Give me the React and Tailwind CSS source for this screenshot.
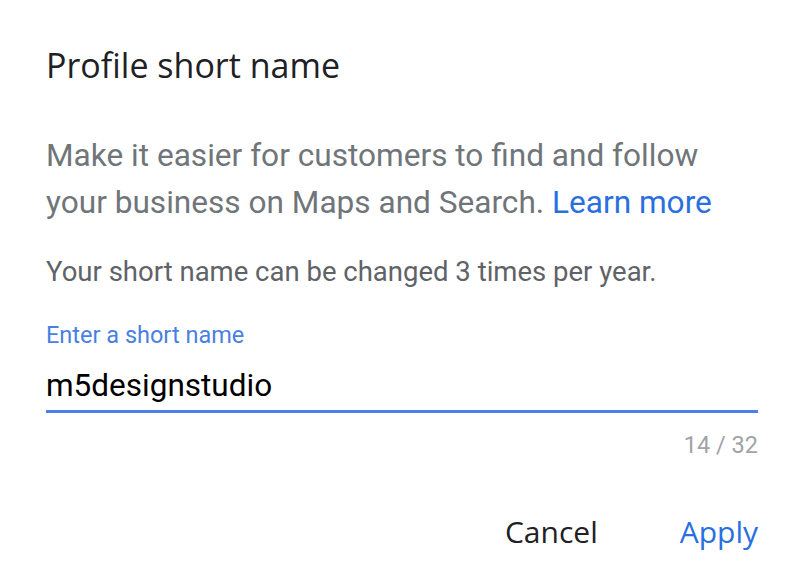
import React from 'react';

const App = () => {
  return (
    <div className="w-[800px] h-[576px] bg-white overflow-hidden" style={{ fontFamily: 'Roboto, "Liberation Sans", sans-serif' }}>
      <div className="pl-[46px] pr-[42px] pt-[45px]">
        <h2 className="text-[34px] leading-[40px] text-[#202124]" style={{ fontFamily: '"Open Sans", "Noto Sans", sans-serif' }}>
          Profile short name
        </h2>

        <p className="mt-[47px] text-[31.6px] leading-[47px] text-[#70757a] whitespace-nowrap">
          Make it easier for customers to find and follow
          <br />
          your business on Maps and Search.{' '}
          <a className="text-[#2a6fdf]">Learn more</a>
        </p>

        <p className="mt-[30px] text-[27.5px] leading-[32px] text-[#5f6368] whitespace-nowrap">
          Your short name can be changed 3 times per year.
        </p>

        <div className="mt-[33px]">
          <label className="block text-[23.5px] leading-[28px] text-[#4a7fe0]">Enter a short name</label>
          <div className="mt-[19px] text-[31.5px] leading-[36px] text-black pb-[6px] border-b-[3px] border-[#4a80e8]">
            m5designstudio
          </div>
          <div className="mt-[18px] text-right text-[23.5px] leading-[28px] text-[#a0a4a8]">14 / 32</div>
        </div>

        <div className="mt-[55px] flex justify-end items-center gap-[82px]" style={{ fontFamily: '"Open Sans", "Noto Sans", sans-serif' }}>
          <button className="text-[30px] leading-[36px] text-[#202124]">Cancel</button>
          <button className="text-[30px] leading-[36px] text-[#2a6fdf]">Apply</button>
        </div>
      </div>
    </div>
  );
};

export default App;
